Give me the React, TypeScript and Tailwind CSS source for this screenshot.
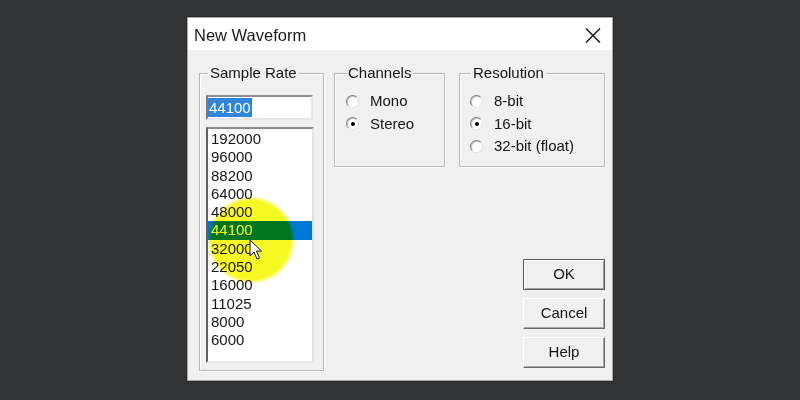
import React from "react";

const rates = ["192000", "96000", "88200", "64000", "48000", "44100", "32000", "22050", "16000", "11025", "8000", "6000"];

function Radio({ checked, label }: { checked?: boolean; label: string }) {
  return (
    <div className="flex items-center h-[22.5px]">
      <span className="relative w-[13px] h-[13px] rounded-full bg-white border border-t-[#7f7f7f] border-l-[#7f7f7f] border-r-[#e2e2e2] border-b-[#e2e2e2] shadow-[inset_1px_1px_0_#c8c8c8] flex items-center justify-center">
        {checked && <span className="w-[4px] h-[4px] rounded-full bg-black" />}
      </span>
      <span className="ml-[11px]">{label}</span>
    </div>
  );
}

function Btn({ label, def }: { label: string; def?: boolean }) {
  return (
    <div
      className={
        def
          ? "w-[82px] h-[31px] bg-[#f0f0f0] border border-[#5a5a5a] shadow-[inset_1px_1px_0_#ffffff,inset_-1px_-1px_0_#a0a0a0] flex items-center justify-center"
          : "w-[82px] h-[31px] bg-[#f0f0f0] border border-t-white border-l-white border-r-[#6a6a6a] border-b-[#6a6a6a] shadow-[inset_-1px_-1px_0_#a8a8a8] flex items-center justify-center"
      }
    >
      {label}
    </div>
  );
}

export default function App() {
  return (
    <div
      className="w-[800px] h-[400px] bg-[#333436] overflow-hidden flex items-start text-[15px] text-[#151515]"
      style={{ fontFamily: '"Liberation Sans", Arial, sans-serif' }}
    >
      <div className="ml-[187px] mt-[17px] w-[426px] h-[364px] flex flex-col border border-[#a8a8a8] bg-[#f0f0f0] shadow-[0_0_0_1px_#2a2a2a]">
        {/* title bar */}
        <div className="h-[32px] bg-white flex items-center justify-between pl-[6px] pr-[11px] shrink-0">
          <span className="text-[16.5px] leading-none text-[#1a1a1a] mt-[2px]">New Waveform</span>
          <svg width="16" height="15" viewBox="0 0 16 15" className="mt-[2px]">
            <path d="M1 0.5 L15 14.5 M15 0.5 L1 14.5" stroke="#222" strokeWidth="1.6" fill="none" />
          </svg>
        </div>
        {/* body */}
        <div className="flex-1 flex items-start pt-[14px] pl-[11px]">
          {/* Sample Rate */}
          <fieldset className="w-[125px] h-[307px] border border-[#b7b7b7] shadow-[inset_1px_1px_0_#ffffff,1px_1px_0_#ffffff] px-[6px] flex flex-col">
            <legend className="ml-[2px] px-[2px] leading-[18px] bg-[#f0f0f0]">Sample Rate</legend>
            <div className="mt-[13px] w-[107px] h-[25px] bg-white border-2 border-t-[#8c8c8c] border-l-[#7a7a7a] border-r-[#e6e6e6] border-b-[#e6e6e6] flex items-center pl-[0px]">
              <span className="bg-[#2f86dc] text-white leading-[19px] px-[1px]">44100</span>
            </div>
            <div className="relative mt-[7px] w-[108px] h-[236px] bg-white border-2 border-t-[#8a8a8a] border-l-[#5e5e5e] border-r-[#e2e2e2] border-b-[#e8e8e8] pt-[1px]">
              {rates.map((r, i) => (
                <div
                  key={r}
                  className={
                    i === 5
                      ? "h-[18.3px] leading-[18.3px] pl-[3px] bg-[#0078d7] text-white"
                      : "h-[18.3px] leading-[18.3px] pl-[3px]"
                  }
                >
                  {r}
                </div>
              ))}
              {/* yellow cursor highlight */}
              <div className="absolute left-[1px] top-[69px] w-[84px] h-[84px] rounded-full bg-[#f8f816] mix-blend-multiply blur-[1.5px] opacity-95" />
              <svg className="absolute left-[41px] top-[110px]" width="14" height="22" viewBox="0 0 14 22">
                <path d="M1 1 L1 17 L5 13 L8 20 L10.5 19 L7.5 12 L12.5 12 Z" fill="#ffffff" stroke="#111" strokeWidth="1" strokeLinejoin="round" />
              </svg>
            </div>
          </fieldset>

          {/* right side */}
          <div className="ml-[10px] w-[271px] flex flex-col">
            <div className="flex items-start gap-[14px]">
              <fieldset className="w-[111px] h-[103px] border border-[#b7b7b7] shadow-[inset_1px_1px_0_#ffffff,1px_1px_0_#ffffff] pl-[11px] pt-[8px]">
                <legend className="ml-[0px] px-[2px] leading-[18px] bg-[#f0f0f0]">Channels</legend>
                <Radio label="Mono" />
                <Radio label="Stereo" checked />
              </fieldset>
              <fieldset className="w-[146px] h-[103px] border border-[#b7b7b7] shadow-[inset_1px_1px_0_#ffffff,1px_1px_0_#ffffff] pl-[10px] pt-[8px]">
                <legend className="ml-[1px] px-[2px] leading-[18px] bg-[#f0f0f0]">Resolution</legend>
                <Radio label="8-bit" />
                <Radio label="16-bit" checked />
                <Radio label="32-bit (float)" />
              </fieldset>
            </div>
            <div className="self-end mt-[92px] flex flex-col gap-[8px]">
              <Btn label="OK" def />
              <Btn label="Cancel" />
              <Btn label="Help" />
            </div>
          </div>
        </div>
      </div>
    </div>
  );
}
